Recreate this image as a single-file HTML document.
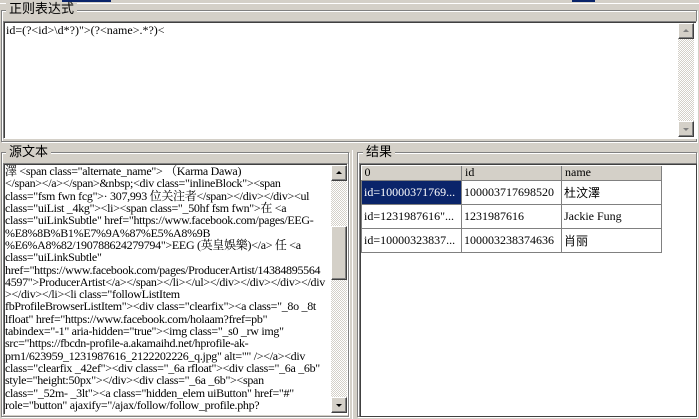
<!DOCTYPE html>
<html><head><meta charset="utf-8"><style>
*{margin:0;padding:0;box-sizing:border-box}
html,body{width:699px;height:419px;overflow:hidden}
body{background:#d4d0c8;position:relative;font-family:"Liberation Serif","Noto Serif CJK SC",serif;font-size:12px;color:#000}
.a{position:absolute}
.grp{position:absolute;border:1px solid #808080;box-shadow:inset 1px 1px 0 #fff,1px 1px 0 #fff}
.lbl{position:absolute;background:#d4d0c8;padding:0 3px;font-family:"Liberation Sans","Noto Sans CJK SC",sans-serif;font-size:13px;line-height:14px}
.ta{position:absolute;background:#fff;border:1px solid;border-color:#808080 #fff #fff #808080;box-shadow:inset 1px 1px 0 #404040}
.sb{position:absolute;width:16px;background-color:#e8e6e1;background-image:repeating-conic-gradient(#fff 0 25%,#d4d0c8 0 50%);background-size:2px 2px}
.btn{position:absolute;left:0;width:16px;height:16px;background:#d4d0c8;border:1px solid;border-color:#fff #404040 #404040 #fff;box-shadow:inset -1px -1px 0 #808080}
.up::after,.dn::after{content:"";position:absolute;left:4px;border-left:3px solid transparent;border-right:3px solid transparent}
.up::after{top:5px;border-bottom:3px solid #000}
.dn::after{top:6px;border-top:3px solid #000}
.dis.up::after{border-bottom-color:#808080}.dis.dn::after{border-top-color:#808080}
.srcbox{position:absolute;left:5px;top:165px;width:326px;height:248px;overflow:hidden}
.srcbox div{height:12.32px;line-height:13px;white-space:pre;overflow:visible;font-size:12px;letter-spacing:-0.3px}
table{position:absolute;left:361px;top:166px;border-collapse:collapse;font-size:12px}
td{border:1px solid #808080;height:24px;padding:0 2px;white-space:nowrap;overflow:hidden;width:100px;max-width:100px}
th{background:#d4d0c8;font-weight:normal;text-align:left;height:14px;padding:0 3px;border-right:1px solid #808080;border-bottom:1px solid #808080;line-height:13px;font-size:12px}
.sel{background:#0a246a;color:#fff}
</style></head><body>
<div class="a" style="left:0;top:3px;width:699px;height:1px;background:#fff"></div>
<div class="a" style="left:62px;top:0;width:49px;height:2px;background:#0a246a"></div>
<div class="a" style="left:572px;top:0;width:23px;height:2px;background:#0a246a"></div>

<div class="grp" style="left:1px;top:10px;width:696px;height:132px"></div>
<div class="lbl" style="left:6px;top:2px">正则表达式</div>
<div class="ta" style="left:3px;top:21px;width:694px;height:118px"></div>
<div class="a" style="left:6px;top:24px;line-height:13px">id=(?&lt;id&gt;\d*?)"&gt;(?&lt;name&gt;.*?)&lt;</div>
<div class="sb" style="left:678px;top:23px;height:114px"><div class="btn dis up" style="top:0"></div><div class="btn dis dn" style="top:98px"></div></div>

<div class="grp" style="left:1px;top:152px;width:348px;height:265px"></div>
<div class="lbl" style="left:6px;top:145px">源文本</div>
<div class="ta" style="left:3px;top:163px;width:345px;height:252px"></div>
<div class="srcbox">
<div>澤 &lt;span class="alternate_name"&gt; （Karma Dawa)</div>
<div>&lt;/span&gt;&lt;/a&gt;&lt;/span&gt;&amp;nbsp;&lt;div class="inlineBlock"&gt;&lt;span</div>
<div>class="fsm fwn fcg"&gt;· 307,993 位关注者&lt;/span&gt;&lt;/div&gt;&lt;/div&gt;&lt;ul</div>
<div>class="uiList _4kg"&gt;&lt;li&gt;&lt;span class="_50hf fsm fwn"&gt;在 &lt;a</div>
<div>class="uiLinkSubtle" href="https://www.facebook.com/pages/EEG-</div>
<div>%E8%8B%B1%E7%9A%87%E5%A8%9B</div>
<div>%E6%A8%82/190788624279794"&gt;EEG (英皇娛樂)&lt;/a&gt; 任 &lt;a</div>
<div>class="uiLinkSubtle"</div>
<div>href="https://www.facebook.com/pages/ProducerArtist/14384895564</div>
<div>4597"&gt;ProducerArtist&lt;/a&gt;&lt;/span&gt;&lt;/li&gt;&lt;/ul&gt;&lt;/div&gt;&lt;/div&gt;&lt;/div&gt;&lt;/div</div>
<div>&gt;&lt;/div&gt;&lt;/li&gt;&lt;li class="followListItem</div>
<div>fbProfileBrowserListItem"&gt;&lt;div class="clearfix"&gt;&lt;a class="_8o _8t</div>
<div>lfloat" href="https://www.facebook.com/holaam?fref=pb"</div>
<div>tabindex="-1" aria-hidden="true"&gt;&lt;img class="_s0 _rw img"</div>
<div>src="https://fbcdn-profile-a.akamaihd.net/hprofile-ak-</div>
<div>prn1/623959_1231987616_2122202226_q.jpg" alt="" /&gt;&lt;/a&gt;&lt;div</div>
<div>class="clearfix _42ef"&gt;&lt;div class="_6a rfloat"&gt;&lt;div class="_6a _6b"</div>
<div>style="height:50px"&gt;&lt;/div&gt;&lt;div class="_6a _6b"&gt;&lt;span</div>
<div>class="_52m- _3lt"&gt;&lt;a class="hidden_elem uiButton" href="#"</div>
<div>role="button" ajaxify="/ajax/follow/follow_profile.php?</div>
</div>
<div class="sb" style="left:331px;top:165px;height:248px"><div class="btn up" style="top:0"></div><div class="btn" style="top:61px;height:54px"></div><div class="btn dn" style="top:232px"></div></div>

<div class="a" style="left:352px;top:150px;width:1px;height:269px;background:#fff"></div>
<div class="grp" style="left:357px;top:152px;width:340px;height:265px"></div>
<div class="lbl" style="left:363px;top:145px">结果</div>
<div class="ta" style="left:359px;top:163px;width:338px;height:254px;border-color:#808080 #404040 #404040 #808080"></div>
<table>
<tr><th style="width:100px">0</th><th style="width:100px">id</th><th style="width:100px">name</th></tr>
<tr><td class="sel">id=10000371769...</td><td>100003717698520</td><td style="font-family:'Liberation Sans','Noto Sans CJK SC',sans-serif">杜汶澤</td></tr>
<tr><td>id=1231987616"...</td><td>1231987616</td><td>Jackie Fung</td></tr>
<tr><td>id=10000323837...</td><td>100003238374636</td><td style="font-family:'Liberation Sans','Noto Sans CJK SC',sans-serif">肖丽</td></tr>
</table>
</body></html>
